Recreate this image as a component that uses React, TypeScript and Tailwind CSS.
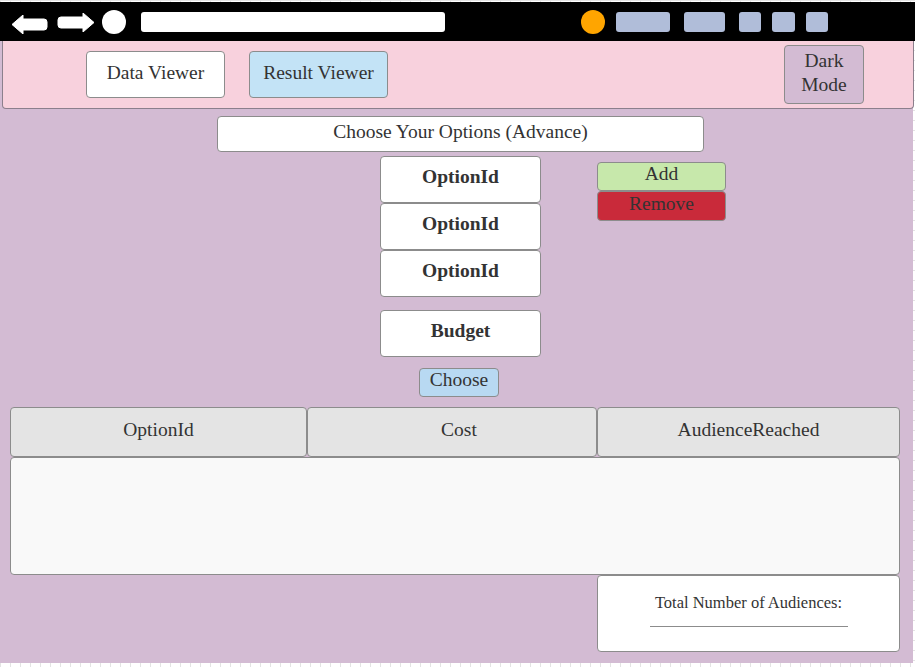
import React from "react";

const serif = "font-['Liberation_Serif','Times_New_Roman',serif]";

function BackArrow() {
  return (
    <svg width="36" height="19" viewBox="0 0 36 19">
      <path d="M0 9.5 L11 0 L11 4 L32 4 Q35 4 35 7 L35 12 Q35 15 32 15 L11 15 L11 19 Z" fill="white" strokeLinejoin="round" stroke="white" strokeWidth="1" />
    </svg>
  );
}

function FwdArrow() {
  return (
    <svg width="38" height="19" viewBox="0 0 38 19">
      <path d="M37 9.5 L26 0 L26 4 L4 4 Q1 4 1 7 L1 12 Q1 15 4 15 L26 15 L26 19 Z" fill="white" strokeLinejoin="round" stroke="white" strokeWidth="1" />
    </svg>
  );
}

export default function App() {
  const box = "border border-[#8c8c8c] rounded-[4px]";
  return (
    <div
      className={`w-[915px] h-[667px] overflow-hidden bg-white bg-[linear-gradient(to_right,#e3e3e3_1px,transparent_1px),linear-gradient(to_bottom,#e3e3e3_1px,transparent_1px)] bg-[size:10px_10px] ${serif} text-[#333]`}
    >
      <div className="h-[2px]" />
      {/* Browser bar */}
      <div className="h-[39px] w-full bg-black flex items-center">
        <div className="ml-[12px] mt-[5px] flex items-center">
          <BackArrow />
        </div>
        <div className="ml-[9px] mt-[1px] flex items-center">
          <FwdArrow />
        </div>
        <div className="ml-[7px] w-[24px] h-[24px] rounded-full bg-white" />
        <div className="ml-[15px] w-[304px] h-[20px] rounded-[3px] bg-white" />
        <div className="ml-[136px] w-[24px] h-[24px] rounded-full bg-[#ffa500]" />
        <div className="ml-[11px] w-[54px] h-[20px] rounded-[3px] bg-[#b0bdd9]" />
        <div className="ml-[14px] w-[41px] h-[20px] rounded-[3px] bg-[#b0bdd9]" />
        <div className="ml-[14px] w-[22px] h-[20px] rounded-[3px] bg-[#b0bdd9]" />
        <div className="ml-[11px] w-[23px] h-[20px] rounded-[3px] bg-[#b0bdd9]" />
        <div className="ml-[11px] w-[22px] h-[20px] rounded-[3px] bg-[#b0bdd9]" />
      </div>

      {/* Purple body area */}
      <div className="w-[913px] h-[622px] bg-[#d3bbd3] flex flex-col">
        {/* Header */}
        <div className="ml-[2px] w-[912px] h-[68px] bg-[#f8d1dd] border-l border-r border-b border-[#8c7f8c] rounded-b-[4px] flex items-start">
          <button className={`ml-[83px] mt-[10px] w-[139px] h-[47px] bg-white ${box} text-[19.5px] leading-none pb-[4px]`}>
            Data Viewer
          </button>
          <button className={`ml-[24px] mt-[10px] w-[139px] h-[47px] bg-[#c3e3f6] ${box} text-[19.5px] leading-none pb-[4px]`}>
            Result Viewer
          </button>
          <button className={`ml-[396px] mt-[4px] w-[80px] h-[59px] bg-[#d3bbd3] ${box} text-[19.5px] leading-[24px] flex flex-col items-center justify-center pb-[4px]`}>
            <span>Dark</span>
            <span>Mode</span>
          </button>
        </div>

        {/* Title */}
        <div className={`ml-[217px] mt-[7px] w-[487px] h-[36px] bg-white ${box} flex items-center justify-center text-[19.5px] pb-[4px]`}>
          Choose Your Options (Advance)
        </div>

        {/* Options row */}
        <div className="mt-[4px] flex items-start">
          <div className="ml-[380px] w-[161px] flex flex-col">
            {[0, 1, 2].map((i) => (
              <div
                key={i}
                className={`h-[47px] bg-white ${box} flex items-center justify-center font-bold text-[19.5px] pb-[5px]`}
              >
                OptionId
              </div>
            ))}
          </div>
          <div className="ml-[56px] mt-[6px] w-[129px] flex flex-col">
            <button className={`h-[29px] bg-[#c7e8ab] ${box} text-[19.5px] leading-[22px] flex justify-center pt-0`}>
              Add
            </button>
            <button className={`h-[30px] bg-[#c92a3a] ${box} text-[19.5px] leading-[22px] flex justify-center pt-[1px]`}>
              Remove
            </button>
          </div>
        </div>

        {/* Budget */}
        <div className={`ml-[380px] mt-[13px] w-[161px] h-[47px] bg-white ${box} flex items-center justify-center font-bold text-[19.5px] pb-[5px]`}>
          Budget
        </div>

        {/* Choose */}
        <button className={`ml-[419px] mt-[11px] w-[80px] h-[29px] bg-[#b8d9f2] ${box} text-[19.5px] leading-[22px] flex justify-center pb-[4px] items-start`}>
          Choose
        </button>

        {/* Table */}
        <div className="ml-[10px] mt-[10px] w-[890px] flex flex-col">
          <div className="flex h-[50px]">
            <div className={`w-[297px] bg-[#e4e4e4] ${box} flex items-center justify-center text-[19.5px] pb-[4px]`}>
              OptionId
            </div>
            <div className={`w-[290px] bg-[#e4e4e4] ${box} flex items-center justify-center text-[19.5px] pb-[4px] pl-[14px]`}>
              Cost
            </div>
            <div className={`w-[303px] bg-[#e4e4e4] ${box} flex items-center justify-center text-[19.5px] pb-[4px]`}>
              AudienceReached
            </div>
          </div>
          <div className={`h-[118px] bg-[#f9f9f9] ${box}`} />
          <div className={`ml-[587px] w-[303px] h-[77px] bg-white ${box} flex flex-col items-center`}>
            <div className="mt-[17px] text-[16.5px] leading-[20px]">Total Number of Audiences:</div>
            <div className="mt-[13px] w-[198px] h-[1px] bg-[#8c8c8c]" />
          </div>
        </div>
      </div>
    </div>
  );
}
